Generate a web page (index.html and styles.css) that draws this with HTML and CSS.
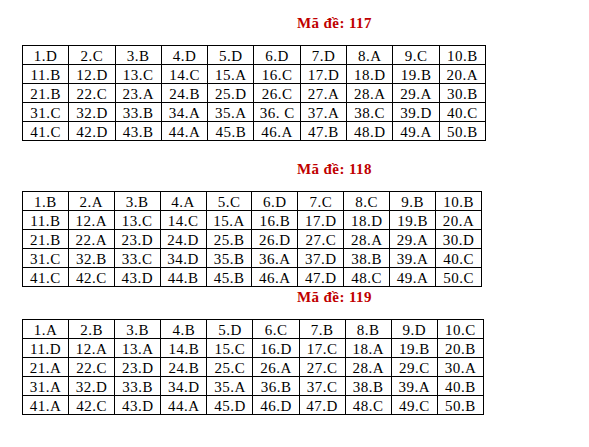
FILE: index.html
```html
<!DOCTYPE html>
<html lang="vi">
<head>
  <meta charset="UTF-8" />
  <meta name="viewport" content="width=device-width, initial-scale=1.0" />
  <title>Đáp án</title>
  <link rel="stylesheet" href="styles.css">
</head>
<body>
  <div class="page">
    <div class="code first">Mã đề: 117</div>
    <table class="answers w1">
      <tr><td>1.D</td><td>2.C</td><td>3.B</td><td>4.D</td><td>5.D</td><td>6.D</td><td>7.D</td><td>8.A</td><td>9.C</td><td>10.B</td></tr>
      <tr><td>11.B</td><td>12.D</td><td>13.C</td><td>14.C</td><td>15.A</td><td>16.C</td><td>17.D</td><td>18.D</td><td>19.B</td><td>20.A</td></tr>
      <tr><td>21.B</td><td>22.C</td><td>23.A</td><td>24.B</td><td>25.D</td><td>26.C</td><td>27.A</td><td>28.A</td><td>29.A</td><td>30.B</td></tr>
      <tr><td>31.C</td><td>32.D</td><td>33.B</td><td>34.A</td><td>35.A</td><td>36. C</td><td>37.A</td><td>38.C</td><td>39.D</td><td>40.C</td></tr>
      <tr><td>41.C</td><td>42.D</td><td>43.B</td><td>44.A</td><td>45.B</td><td>46.A</td><td>47.B</td><td>48.D</td><td>49.A</td><td>50.B</td></tr>
    </table>

    <div class="code second">Mã đề: 118</div>
    <table class="answers w2">
      <tr><td>1.B</td><td>2.A</td><td>3.B</td><td>4.A</td><td>5.C</td><td>6.D</td><td>7.C</td><td>8.C</td><td>9.B</td><td>10.B</td></tr>
      <tr><td>11.B</td><td>12.A</td><td>13.C</td><td>14.C</td><td>15.A</td><td>16.B</td><td>17.D</td><td>18.D</td><td>19.B</td><td>20.A</td></tr>
      <tr><td>21.B</td><td>22.A</td><td>23.D</td><td>24.D</td><td>25.B</td><td>26.D</td><td>27.C</td><td>28.A</td><td>29.A</td><td>30.D</td></tr>
      <tr><td>31.C</td><td>32.B</td><td>33.C</td><td>34.D</td><td>35.B</td><td>36.A</td><td>37.D</td><td>38.B</td><td>39.A</td><td>40.C</td></tr>
      <tr><td>41.C</td><td>42.C</td><td>43.D</td><td>44.B</td><td>45.B</td><td>46.A</td><td>47.D</td><td>48.C</td><td>49.A</td><td>50.C</td></tr>
    </table>

    <div class="code third">Mã đề: 119</div>
    <table class="answers w3">
      <tr><td>1.A</td><td>2.B</td><td>3.B</td><td>4.B</td><td>5.D</td><td>6.C</td><td>7.B</td><td>8.B</td><td>9.D</td><td>10.C</td></tr>
      <tr><td>11.D</td><td>12.A</td><td>13.A</td><td>14.B</td><td>15.C</td><td>16.D</td><td>17.C</td><td>18.A</td><td>19.B</td><td>20.B</td></tr>
      <tr><td>21.A</td><td>22.C</td><td>23.D</td><td>24.B</td><td>25.C</td><td>26.A</td><td>27.C</td><td>28.A</td><td>29.C</td><td>30.A</td></tr>
      <tr><td>31.A</td><td>32.D</td><td>33.B</td><td>34.D</td><td>35.A</td><td>36.B</td><td>37.C</td><td>38.B</td><td>39.A</td><td>40.B</td></tr>
      <tr><td>41.A</td><td>42.C</td><td>43.D</td><td>44.A</td><td>45.D</td><td>46.D</td><td>47.D</td><td>48.C</td><td>49.C</td><td>50.B</td></tr>
    </table>
  </div>
</body>
</html>
```

FILE: styles.css
```css
body { margin: 0; background: #fff; color: #000; font-family: "Liberation Serif", "Times New Roman", serif; }
.page { padding: 13px 0 0 22px; }
.code { color: #c00000; font-weight: bold; font-size: 15px; line-height: 20px; letter-spacing: 0.4px; padding-left: 275px; }
.second { margin-top: 18px; }
.third { margin-top: 0; }
.answers { border-collapse: collapse; table-layout: fixed; margin-top: 12px; }
.w1 { width: 464px; }
.w2 { width: 460px; }
.w3 { width: 462px; }
.answers td { border: 1px solid #000; padding: 2px 0 0; height: 16px; line-height: 16px; font-size: 15px; letter-spacing: 0.5px; text-align: center; white-space: nowrap; }
```
